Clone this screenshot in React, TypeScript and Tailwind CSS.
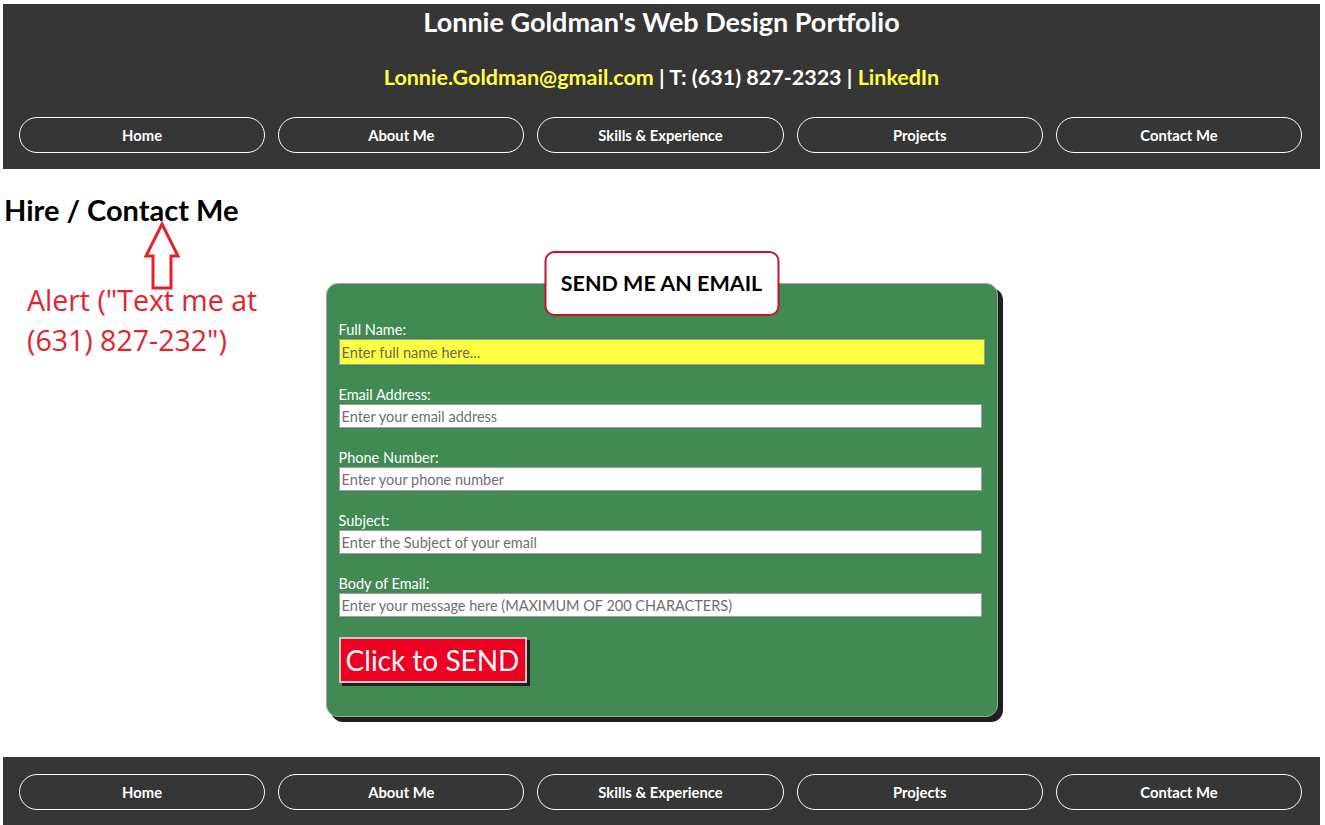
import React from "react";

const navItems = ["Home", "About Me", "Skills & Experience", "Projects", "Contact Me"];

const fields = [
  { label: "Email Address:", placeholder: "Enter your email address" },
  { label: "Phone Number:", placeholder: "Enter your phone number" },
  { label: "Subject:", placeholder: "Enter the Subject of your email" },
  { label: "Body of Email:", placeholder: "Enter your message here (MAXIMUM OF 200 CHARACTERS)" },
];

const NavBar: React.FC = () => (
  <nav className="flex gap-[13px] pl-4 pr-[18px]">
    {navItems.map((item) => (
      <a
        key={item}
        href="#"
        className="flex h-[36px] flex-1 items-center justify-center rounded-[18px] border border-white text-[14.8px] font-bold text-white"
      >
        {item}
      </a>
    ))}
  </nav>
);

const App: React.FC = () => {
  return (
    <div className="min-h-screen bg-white pl-[3px] pr-[5px] pt-[4px] font-['Lato','Open_Sans',sans-serif]">
      {/* Header */}
      <header className="bg-[#363636] pb-[16px]">
        <h1 className="pt-0 text-center text-[27px] font-bold leading-[36px] text-white">
          Lonnie Goldman's Web Design Portfolio
        </h1>
        <p className="mt-[22px] text-center text-[21.5px] font-bold leading-[30px] text-white">
          <a href="#" className="text-[#ffff44]">Lonnie.Goldman@gmail.com</a> | T: (631) 827-2323 |{" "}
          <a href="#" className="text-[#ffff44]">LinkedIn</a>
        </p>
        <div className="mt-[25px]">
          <NavBar />
        </div>
      </header>

      {/* Main */}
      <main className="relative pb-[40px]">
        <h2 className="pt-[24px] pl-[1px] text-[29px] font-bold leading-[34px] text-black">
          Hire / Contact Me
        </h2>

        {/* annotation */}
        <div className="absolute left-[24px] top-[52px]">
          <svg width="40" height="70" viewBox="0 0 40 70" className="absolute left-[115px] top-[0px]">
            <polygon
              points="20,3 36,35 29,35 29,67 11,67 11,35 4,35"
              fill="none"
              stroke="#e3232b"
              strokeWidth="3"
              strokeLinejoin="miter"
            />
          </svg>
          <p className="pt-[59px] font-['Open_Sans',sans-serif] text-[28.5px] leading-[40px] text-[#e3232b]">
            Alert ("Text me at
            <br />
            (631) 827-232")
          </p>
        </div>

        {/* Form card */}
        <div className="flex justify-center pt-[24px]">
          <div className="relative w-[672px]">
            <div className="absolute left-1/2 top-[0px] z-10 flex h-[65px] w-[235px] -translate-x-1/2 items-center justify-center rounded-[10px] border-2 border-[#c8102e] bg-white">
              <span className="text-[21.5px] font-bold text-black">SEND ME AN EMAIL</span>
            </div>
            <form className="mt-[32px] rounded-[12px] border border-[#9aa89c] bg-[#418a53] px-[12px] pb-[33px] pt-[38px] shadow-[5px_5px_0_#1f1f1f]">
              <label className="block text-[14.5px] leading-[16px] text-white">Full Name:</label>
              <input
                className="mt-[1px] block h-[26px] w-[646px] border border-[#9a9a9a] bg-[#ffff44] px-[2px] text-[14.5px] text-black placeholder:text-[#6b6b55] outline-none"
                placeholder="Enter full name here..."
              />
              {fields.map((f) => (
                <div key={f.label} className="mt-[22px]">
                  <label className="block text-[14.5px] leading-[16px] text-white">{f.label}</label>
                  <input
                    className="mt-[1px] block h-[24px] w-[643px] border border-[#a0a0a0] bg-white px-[2px] text-[14.5px] text-black placeholder:text-[#6f6f6f] outline-none"
                    placeholder={f.placeholder}
                  />
                </div>
              ))}
              <button
                type="button"
                className="mt-[20px] h-[46px] w-[188px] border-2 border-[#d9c4c4] bg-[#ee0022] text-[28px] leading-[40px] text-white shadow-[3px_3px_0_#1f1f1f]"
              >
                Click to SEND
              </button>
            </form>
          </div>
        </div>
      </main>

      {/* Footer */}
      <footer className="bg-[#363636] pt-[17px] pb-[17px]">
        <NavBar />
      </footer>
    </div>
  );
};

export default App;
